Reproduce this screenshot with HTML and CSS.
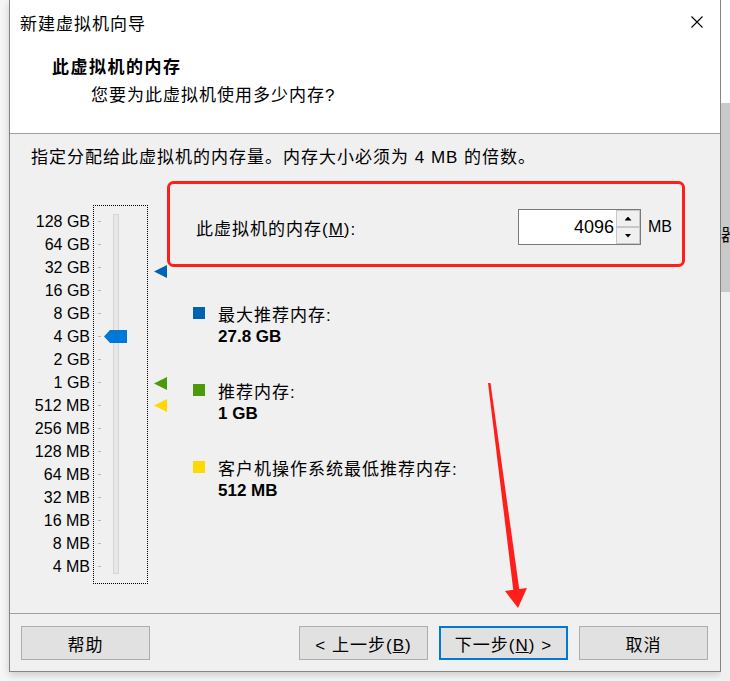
FILE: index.html
```html
<!DOCTYPE html>
<html lang="zh-CN">
<head>
    <meta charset="UTF-8">
    <title>新建虚拟机向导</title>
    <link rel="stylesheet" href="styles.css">
</head>
<body>
    <div class="desk">
        <div class="wizard">
            <div class="header">
                <div class="titlebar">
                    <span class="zh">新建虚拟机向导</span>
                    <svg class="close" width="12" height="12" viewBox="0 0 12 12">
                        <path d="M0.5 0.5L11.5 11.5M11.5 0.5L0.5 11.5" stroke="#000" stroke-width="1.1" fill="none"/>
                    </svg>
                </div>
                <div class="heading zh">此虚拟机的内存</div>
                <div class="subheading zh">您要为此虚拟机使用多少内存?</div>
            </div>

            <div class="content">
                <p class="hint zh">指定分配给此虚拟机的内存量。内存大小必须为 4 MB 的倍数。</p>
                <div class="main">
                    <div class="scale">
                        <div>128 GB</div>
                        <div>64 GB</div>
                        <div>32 GB</div>
                        <div>16 GB</div>
                        <div>8 GB</div>
                        <div>4 GB</div>
                        <div>2 GB</div>
                        <div>1 GB</div>
                        <div>512 MB</div>
                        <div>256 MB</div>
                        <div>128 MB</div>
                        <div>64 MB</div>
                        <div>32 MB</div>
                        <div>16 MB</div>
                        <div>8 MB</div>
                        <div>4 MB</div>
                    </div>
                    <div class="slider">
                        <div class="ticks">
                            <span></span><span></span><span></span><span></span>
                            <span></span><span></span><span></span><span></span>
                            <span></span><span></span><span></span><span></span>
                            <span></span><span></span><span></span><span></span>
                        </div>
                        <div class="track"></div>
                        <div class="thumb" style="top: 124px"></div>
                    </div>
                    <div class="markers">
                        <span class="marker blue" style="top: 60px"></span>
                        <span class="marker green" style="top: 172px"></span>
                        <span class="marker yellow" style="top: 194px"></span>
                    </div>
                    <div class="panel">
                        <div class="mem-row">
                            <label class="mem-label zh">此虚拟机的内存(<u>M</u>):</label>
                            <div class="spin">
                                <input class="spin-input" type="text" value="4096" readonly>
                                <div class="spin-btns">
                                    <span class="spin-btn"><i class="arrow up"></i></span>
                                    <span class="spin-btn"><i class="arrow down"></i></span>
                                </div>
                            </div>
                            <span class="unit">MB</span>
                        </div>
                        <div class="legend">
                            <div class="item">
                                <div class="item-label zh"><i class="sq blue"></i>最大推荐内存:</div>
                                <div class="item-value">27.8 GB</div>
                            </div>
                            <div class="item">
                                <div class="item-label zh"><i class="sq green"></i>推荐内存:</div>
                                <div class="item-value">1 GB</div>
                            </div>
                            <div class="item">
                                <div class="item-label zh"><i class="sq yellow"></i>客户机操作系统最低推荐内存:</div>
                                <div class="item-value">512 MB</div>
                            </div>
                        </div>
                    </div>
                </div>
            </div>

            <div class="footer">
                <button class="btn zh">帮助</button>
                <span class="spacer"></span>
                <button class="btn zh">&lt; 上一步(<u>B</u>)</button>
                <button class="btn zh primary">下一步(<u>N</u>) &gt;</button>
                <button class="btn zh">取消</button>
            </div>
        </div>

        <div class="behind">
            <div class="behind-top"></div>
            <div class="behind-mid"><span class="zh">器</span></div>
            <div class="behind-rest"></div>
        </div>
    </div>

    <!-- red marks drawn over the screenshot -->
    <svg class="annot" width="730" height="681" viewBox="0 0 730 681">
        <rect x="168.5" y="182.5" width="515" height="83" rx="5" fill="none" stroke="#ff1f1a" stroke-width="3"/>
        <polygon points="488,383 490.5,383 519.5,591 513.5,592" fill="#ff1f1a"/>
        <polygon points="505,591 527,588 518,608" fill="#ff1f1a"/>
    </svg>
</body>
</html>
```

FILE: styles.css
```css
* {
    box-sizing: border-box;
}
body {
    margin: 0;
    width: 730px;
    height: 681px;
    overflow: hidden;
    position: relative;
    background: #f6f6f6;
    color: #000;
    font-family: "Liberation Sans", "Noto Sans CJK SC", sans-serif;
    font-size: 16px;
}
.zh {
    font-size: 17px;
    letter-spacing: 1px;
}
.desk {
    display: flex;
    align-items: flex-start;
    padding-left: 9px;
}

/* dialog */
.wizard {
    width: 712px;
    height: 672px;
    border: 1px solid #858585;
    border-top: none;
    background: #f0f0f0;
    box-shadow: 0 3px 8px rgba(0, 0, 0, 0.18);
    display: flex;
    flex-direction: column;
}
.header {
    height: 134px;
    background: #fff;
    border-bottom: 1px solid #a0a0a0;
}
.titlebar {
    height: 44px;
    display: flex;
    align-items: center;
    justify-content: space-between;
    padding: 0 17px 0 10px;
}
.heading {
    margin-top: 12px;
    padding-left: 42px;
    line-height: 24px;
    font-weight: bold;
    letter-spacing: 1.5px;
}
.subheading {
    margin-top: 4px;
    padding-left: 81px;
    line-height: 24px;
}

.content {
    height: 479px;
    padding: 12px 0 0 21px;
}
.hint {
    margin: 0;
    line-height: 24px;
}
.main {
    margin-top: 35px;
    display: flex;
    align-items: flex-start;
}

/* slider */
.scale {
    width: 59px;
    padding-top: 5px;
    text-align: right;
    font-size: 16px;
    line-height: 23px;
}
.slider {
    position: relative;
    margin-left: 3px;
    width: 55px;
    height: 379px;
    border: 1px dotted #000;
    display: flex;
    align-items: flex-start;
}
.ticks {
    margin-left: 4px;
    padding-top: 4px;
    width: 3px;
}
.ticks span {
    display: block;
    height: 23px;
    background: linear-gradient(#b8b8b8, #b8b8b8) center / 3px 1px no-repeat;
}
.track {
    margin-left: 12px;
    margin-top: 8px;
    width: 6px;
    height: 360px;
    background: #e7e7e7;
    border: 1px solid #d6d6d6;
}
.thumb {
    position: absolute;
    left: 10px;
    width: 23px;
    height: 13px;
    background: #0078d7;
    clip-path: polygon(0 50%, 6px 0, 100% 0, 100% 100%, 6px 100%);
}
.markers {
    position: relative;
    width: 20px;
    height: 379px;
}
.marker {
    position: absolute;
    left: 6px;
    width: 13px;
    height: 13px;
    clip-path: polygon(0 50%, 100% 0, 100% 100%);
}
.blue { background: #0063b1; }
.green { background: #4a9a0a; }
.yellow { background: #ffd800; }

/* right side */
.panel {
    margin-left: 25px;
}
.mem-row {
    margin-top: 4px;
    height: 36px;
    display: flex;
    align-items: center;
}
.mem-label {
    width: 325px;
    padding-left: 3px;
}
.spin {
    width: 123px;
    height: 36px;
    display: flex;
    border: 1px solid #7a7a7a;
    background: #fff;
}
.spin-input {
    width: 97px;
    border: none;
    outline: none;
    background: transparent;
    padding: 0 2px 0 0;
    text-align: right;
    font-family: "Liberation Sans", sans-serif;
    font-size: 18px;
    color: #000;
}
.spin-btns {
    width: 24px;
    display: flex;
    flex-direction: column;
}
.spin-btn {
    flex: 1;
    display: flex;
    align-items: center;
    justify-content: center;
    background: #f0f0f0;
    border: 1px solid #c8c8c8;
}
.arrow {
    width: 7px;
    height: 4px;
    background: #000;
}
.arrow.up { clip-path: polygon(50% 0, 100% 100%, 0 100%); }
.arrow.down { clip-path: polygon(0 0, 100% 0, 50% 100%); }
.unit {
    margin-left: 7px;
    font-size: 16px;
}
.legend {
    margin-top: 56px;
}
.item + .item {
    margin-top: 29px;
}
.item-label {
    height: 24px;
    display: flex;
    align-items: center;
}
.sq {
    width: 12px;
    height: 12px;
    margin-right: 13px;
}
.item-value {
    padding-left: 25px;
    line-height: 24px;
    font-size: 17px;
    font-weight: bold;
}

/* buttons */
.footer {
    height: 58px;
    border-top: 1px solid #a0a0a0;
    padding: 12px 12px 11px 11px;
    display: flex;
    gap: 11px;
}
.spacer {
    flex: 1;
}
.btn {
    width: 129px;
    height: 34px;
    padding: 0;
    background: #e1e1e1;
    border: 1px solid #adadad;
    color: #000;
    font-family: "Liberation Sans", "Noto Sans CJK SC", sans-serif;
}
.btn.primary {
    border: 2px solid #0078d7;
}

/* window behind the dialog */
.behind {
    width: 9px;
    height: 681px;
    display: flex;
    flex-direction: column;
    overflow: hidden;
}
.behind-top {
    height: 103px;
    background: #fff;
}
.behind-mid {
    height: 189px;
    background: #c9c9c9;
    padding-top: 118px;
    white-space: nowrap;
}
.behind-rest {
    flex: 1;
    background: #f0f0f0;
}

.annot {
    position: absolute;
    top: 0;
    left: 0;
    pointer-events: none;
}
```
